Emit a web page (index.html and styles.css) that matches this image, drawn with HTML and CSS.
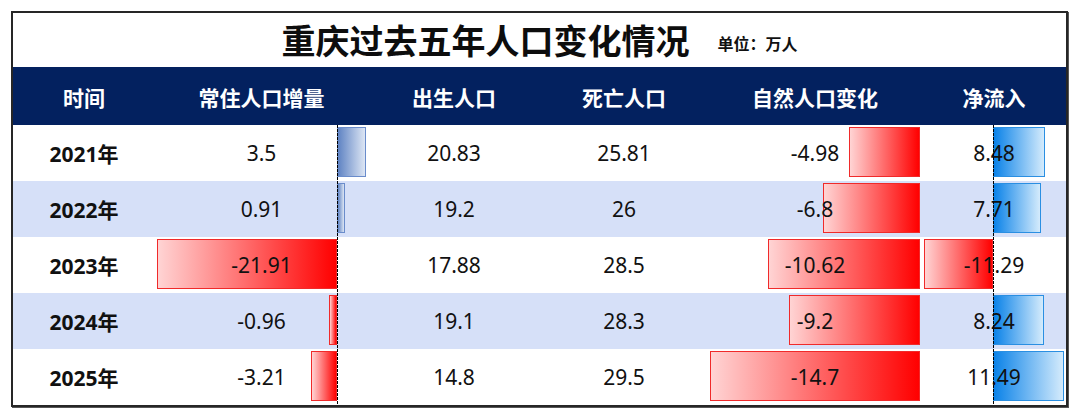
FILE: index.html
```html
<!DOCTYPE html>
<html lang="zh">
<head>
<meta charset="utf-8">
<title>重庆过去五年人口变化情况</title>
<link rel="stylesheet" href="styles.css">
</head>
<body>
<div class="sheet">
  <div class="title-bar">
    <h1 class="title">重庆过去五年人口变化情况</h1>
    <span class="unit">单位：万人</span>
  </div>
  <div class="grid head">
    <div class="cell">时间</div>
    <div class="cell">常住人口增量</div>
    <div class="cell">出生人口</div>
    <div class="cell">死亡人口</div>
    <div class="cell">自然人口变化</div>
    <div class="cell">净流入</div>
  </div>

  <div class="grid row">
    <div class="cell year">2021年</div>
    <div class="cell bar-cell">
      <div class="track"><span class="bar bar-blue" style="left:86.23%;width:13.77%"></span><span class="axis" style="left:86.23%"></span></div>
      <span class="val">3.5</span>
    </div>
    <div class="cell">20.83</div>
    <div class="cell">25.81</div>
    <div class="cell bar-cell">
      <div class="track"><span class="bar bar-red" style="left:66.12%;width:33.88%"></span></div>
      <span class="val">-4.98</span>
    </div>
    <div class="cell bar-cell">
      <div class="track"><span class="bar bar-sky" style="left:49.56%;width:37.23%"></span><span class="axis" style="left:49.56%"></span></div>
      <span class="val">8.48</span>
    </div>
  </div>

  <div class="grid row alt">
    <div class="cell year">2022年</div>
    <div class="cell bar-cell">
      <div class="track"><span class="bar bar-blue" style="left:86.23%;width:3.58%"></span><span class="axis" style="left:86.23%"></span></div>
      <span class="val">0.91</span>
    </div>
    <div class="cell">19.2</div>
    <div class="cell">26</div>
    <div class="cell bar-cell">
      <div class="track"><span class="bar bar-red" style="left:53.74%;width:46.26%"></span></div>
      <span class="val">-6.8</span>
    </div>
    <div class="cell bar-cell">
      <div class="track"><span class="bar bar-sky" style="left:49.56%;width:33.85%"></span><span class="axis" style="left:49.56%"></span></div>
      <span class="val">7.71</span>
    </div>
  </div>

  <div class="grid row">
    <div class="cell year">2023年</div>
    <div class="cell bar-cell">
      <div class="track"><span class="bar bar-red" style="left:0%;width:86.23%"></span><span class="axis" style="left:86.23%"></span></div>
      <span class="val">-21.91</span>
    </div>
    <div class="cell">17.88</div>
    <div class="cell">28.5</div>
    <div class="cell bar-cell">
      <div class="track"><span class="bar bar-red" style="left:27.76%;width:72.24%"></span></div>
      <span class="val">-10.62</span>
    </div>
    <div class="cell bar-cell">
      <div class="track"><span class="bar bar-red" style="left:0%;width:49.56%"></span><span class="axis" style="left:49.56%"></span></div>
      <span class="val">-11.29</span>
    </div>
  </div>

  <div class="grid row alt">
    <div class="cell year">2024年</div>
    <div class="cell bar-cell">
      <div class="track"><span class="bar bar-red" style="left:82.45%;width:3.78%"></span><span class="axis" style="left:86.23%"></span></div>
      <span class="val">-0.96</span>
    </div>
    <div class="cell">19.1</div>
    <div class="cell">28.3</div>
    <div class="cell bar-cell">
      <div class="track"><span class="bar bar-red" style="left:37.41%;width:62.59%"></span></div>
      <span class="val">-9.2</span>
    </div>
    <div class="cell bar-cell">
      <div class="track"><span class="bar bar-sky" style="left:49.56%;width:36.17%"></span><span class="axis" style="left:49.56%"></span></div>
      <span class="val">8.24</span>
    </div>
  </div>

  <div class="grid row">
    <div class="cell year">2025年</div>
    <div class="cell bar-cell">
      <div class="track"><span class="bar bar-red" style="left:73.60%;width:12.63%"></span><span class="axis" style="left:86.23%"></span></div>
      <span class="val">-3.21</span>
    </div>
    <div class="cell">14.8</div>
    <div class="cell">29.5</div>
    <div class="cell bar-cell">
      <div class="track"><span class="bar bar-red" style="left:0%;width:100%"></span></div>
      <span class="val">-14.7</span>
    </div>
    <div class="cell bar-cell">
      <div class="track"><span class="bar bar-sky" style="left:49.56%;width:50.44%"></span><span class="axis" style="left:49.56%"></span></div>
      <span class="val">11.49</span>
    </div>
  </div>
</div>
</body>
</html>
```

FILE: styles.css
```css
* { box-sizing: border-box; }

body {
  margin: 0;
  padding: 11px;
  background: #ffffff;
  font-family: "Noto Sans", "Noto Sans CJK SC", sans-serif;
  color: #111111;
}

.sheet {
  width: 1057px;
  border: 2px solid #262626;
  box-shadow: 1px 1px 0 #555555;
  background: #ffffff;
}

.title-bar {
  height: 54px;
  display: flex;
  align-items: center;
  justify-content: center;
  gap: 28px;
}

.title {
  margin: 0;
  font-family: "Noto Sans CJK SC", sans-serif;
  font-size: 34px;
  font-weight: 700;
  line-height: 1;
  color: #0d0d0d;
}

.unit {
  font-family: "Noto Sans CJK SC", sans-serif;
  font-size: 16px;
  font-weight: 700;
  line-height: 1;
  margin-top: 6px;
  color: #111111;
}

.grid {
  display: grid;
  grid-template-columns: 142px 213px 172px 168px 214px 144px;
}

.head {
  height: 58px;
  background: #03215f;
  color: #ffffff;
  font-family: "Noto Sans CJK SC", sans-serif;
  font-size: 21px;
  font-weight: 700;
}

.head .cell {
  padding-top: 2px;
}

.row {
  height: 56px;
  font-size: 21px;
  background: #ffffff;
}

.row.alt {
  background: #d6e0f8;
}

.cell {
  display: flex;
  align-items: center;
  justify-content: center;
  position: relative;
  white-space: nowrap;
}

.year {
  font-weight: 700;
}

.bar-cell .track {
  position: absolute;
  top: 2px;
  bottom: 4px;
  left: 2px;
  right: 2px;
}

.bar {
  position: absolute;
  top: 0;
  bottom: 0;
}

.bar-blue {
  background: linear-gradient(to right, #5f83c3, #dde6f4);
  border: 1px solid #6a8ccb;
}

.bar-red {
  background: linear-gradient(to right, #ffd4d4, #ff0000);
  border: 1px solid #f02a2a;
}

.bar-sky {
  background: linear-gradient(to right, #0a82e8, #d4ebfc);
  border: 1px solid #2a8fe2;
}

.axis {
  position: absolute;
  top: -2px;
  bottom: -4px;
  width: 1px;
  background: repeating-linear-gradient(to bottom, #000000 0, #000000 3px, transparent 3px, transparent 4px);
  z-index: 2;
}

.val {
  position: relative;
  z-index: 1;
}
```
